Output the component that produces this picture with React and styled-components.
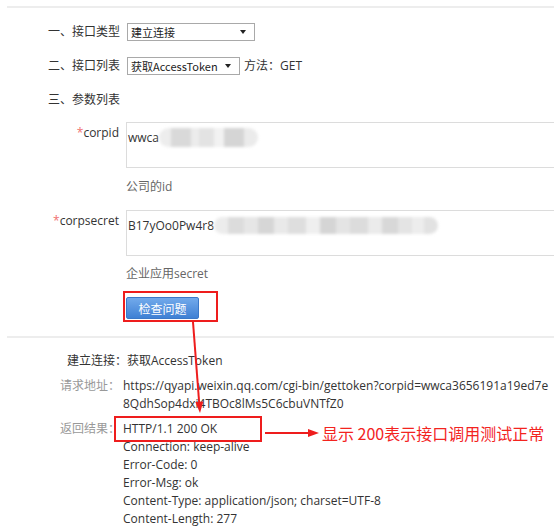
import React from 'react'
import styled, { createGlobalStyle } from 'styled-components'

const GlobalStyle = createGlobalStyle`
  body {
    margin: 0;
    background: #fff;
    color: #333;
    font-family: "Open Sans", "Noto Sans CJK SC", sans-serif;
    font-size: 12px;
  }
`

const RED = '#ee1d1d'

const Page = styled.div`
    position: relative;
    width: 100%;
    height: 526px;
    overflow: hidden;
    box-sizing: border-box;
    padding: 6px 0 0 7px;
`

const Rule = styled.div`
    height: 2px;
    background: #ededed;
    margin-top: ${p => p.$top || 0}px;
`

const Steps = styled.div`
    display: flex;
    flex-direction: column;
    gap: 16px;
    margin-top: 15px;
    padding-left: 41px;
`

const Step = styled.div`
    display: flex;
    align-items: center;
    gap: 7px;
    height: 18px;
    line-height: 18px;
    white-space: nowrap;
`

const Select = styled.div`
    position: relative;
    width: ${p => p.$w}px;
    height: 18px;
    box-sizing: border-box;
    border: 1px solid #a9a9a9;
    padding-left: 3px;
    font-family: "Noto Sans CJK SC", sans-serif;
    font-size: 11px;
    line-height: 16px;
    background: #fff;
    color: #222;
    &::after {
        content: "";
        position: absolute;
        right: 8px;
        top: 6px;
        border-left: 3px solid transparent;
        border-right: 3px solid transparent;
        border-top: 4px solid #222;
    }
`

const Method = styled.span`
    margin-left: -3px;
`

const ParamRow = styled.div`
    display: flex;
    gap: 7px;
    margin-top: ${p => p.$top}px;
`

const ParamLabel = styled.div`
    width: 112px;
    flex-shrink: 0;
    text-align: right;
    padding-top: 2px;
    line-height: 18px;
    color: #333;
`

const Star = styled.span`
    color: #f07070;
`

const Field = styled.div`
    width: 460px;
    flex-shrink: 0;
    height: 46px;
    box-sizing: border-box;
    border: 1px solid #dcdcdc;
    padding: 6px 2px 0 1px;
    font-size: 12px;
    line-height: 18px;
    white-space: nowrap;
    color: #333;
`

const Mosaic = styled.span`
    display: inline-flex;
    vertical-align: middle;
    height: ${p => p.$h}px;
    border-radius: ${p => p.$h / 2}px;
    overflow: hidden;
    filter: blur(1.6px);
    margin-top: -3px;
`

const Cell = styled.span`
    display: block;
    height: 100%;
    width: ${p => p.$w}px;
    background: ${p => p.$c};
`

const Hint = styled.div`
    line-height: 18px;
    color: #666;
`

const ButtonWrap = styled.div`
    position: relative;
`

const CheckButton = styled.button`
    display: block;
    width: 73px;
    height: 22px;
    box-sizing: border-box;
    border: 1px solid #3a78c8;
    border-radius: 2px;
    background: linear-gradient(#72aaeb, #3f80d4);
    color: #fff;
    font-family: "Noto Sans CJK SC", sans-serif;
    font-size: 12px;
    padding: 0;
    cursor: pointer;
`

const RedFrame = styled.span`
    position: absolute;
    left: ${p => p.$l}px;
    top: ${p => p.$t}px;
    width: ${p => p.$w}px;
    height: ${p => p.$h}px;
    box-sizing: border-box;
    border: 2px solid ${RED};
    pointer-events: none;
`

const Results = styled.div`
    display: flex;
    flex-direction: column;
    gap: 7px;
    margin-top: 14px;
`

const Title = styled.div`
    padding-left: 60px;
    line-height: 18px;
    color: #333;
`

const ResultRow = styled.div`
    display: grid;
    grid-template-columns: 113px 1fr;
    column-gap: 3px;
`

const ResultLabel = styled.div`
    text-align: right;
    color: #999;
    line-height: 18px;
`

const Lines = styled.div`
    line-height: 18px;
    white-space: nowrap;
    color: #333;
`

const FirstLine = styled.div`
    position: relative;
`

const Callout = styled.span`
    position: absolute;
    left: 199px;
    top: 3px;
    font-family: "Noto Sans CJK SC", sans-serif;
    font-size: 16px;
    line-height: 20px;
    color: #f3241f;
    white-space: nowrap;
`

const SideArrow = styled.svg`
    position: absolute;
    left: 142px;
    top: 9px;
`

const Overlay = styled.svg`
    position: absolute;
    left: 0;
    top: 0;
    pointer-events: none;
`

const corpidBlur = [
    [12, '#ededed'], [20, '#d9d9d9'], [8, '#ececec'], [15, '#e3e3e3'],
    [10, '#f2f2f2'], [20, '#d5d5d5'], [14, '#ebebeb'],
]

const secretBlur = [
    [14, '#ececec'], [16, '#dcdcdc'], [14, '#e6e6e6'], [16, '#d6d6d6'],
    [14, '#e9e9e9'], [18, '#dedede'], [14, '#efefef'], [16, '#d5d5d5'],
    [14, '#e4e4e4'], [18, '#dcdcdc'], [14, '#ebebeb'], [16, '#d8d8d8'],
    [14, '#e4e4e4'], [12, '#ededed'], [14, '#e2e2e2'],
]

function Blur({ cells, h }) {
    return (
        <Mosaic $h={h}>
            {cells.map(([w, c], i) => <Cell key={i} $w={w} $c={c} />)}
        </Mosaic>
    )
}

function App() {
    return (
        <Page>
            <GlobalStyle />
            <Rule />
            <Steps>
                <Step>
                    <span>一、接口类型</span>
                    <Select $w={128}>建立连接</Select>
                </Step>
                <Step>
                    <span>二、接口列表</span>
                    <Select $w={113}>获取AccessToken</Select>
                    <Method>方法：GET</Method>
                </Step>
                <Step>
                    <span>三、参数列表</span>
                </Step>
            </Steps>

            <ParamRow $top={13}>
                <ParamLabel><Star>*</Star>corpid</ParamLabel>
                <Field>wwca<Blur cells={corpidBlur} h={19} /></Field>
            </ParamRow>
            <ParamRow $top={10}>
                <ParamLabel />
                <Hint>公司的id</Hint>
            </ParamRow>
            <ParamRow $top={14}>
                <ParamLabel><Star>*</Star>corpsecret</ParamLabel>
                <Field>B17yOo0Pw4r8<Blur cells={secretBlur} h={17} /></Field>
            </ParamRow>
            <ParamRow $top={9}>
                <ParamLabel />
                <Hint>企业应用secret</Hint>
            </ParamRow>
            <ParamRow $top={14}>
                <ParamLabel />
                <ButtonWrap>
                    <CheckButton>检查问题</CheckButton>
                    <RedFrame $l={-3} $t={-6} $w={95} $h={31} />
                </ButtonWrap>
            </ParamRow>

            <Rule $top={17} />

            <Results>
                <Title>建立连接：获取AccessToken</Title>
                <ResultRow>
                    <ResultLabel>请求地址：</ResultLabel>
                    <Lines>
                        <div>https://qyapi.weixin.qq.com/cgi-bin/gettoken?corpid=wwca3656191a19ed7e</div>
                        <div>8QdhSop4dxi4TBOc8lMs5C6cbuVNTfZ0</div>
                    </Lines>
                </ResultRow>
                <ResultRow>
                    <ResultLabel>返回结果：</ResultLabel>
                    <Lines>
                        <FirstLine>
                            HTTP/1.1 200 OK
                            <RedFrame $l={-9} $t={-4} $w={148} $h={26} />
                            <SideArrow width="54" height="8" viewBox="0 0 54 8">
                                <line x1="0" y1="4" x2="44" y2="4" stroke={RED} strokeWidth="2" />
                                <polygon points="43,0 54,4 43,8" fill={RED} />
                            </SideArrow>
                            <Callout>显示 200表示接口调用测试正常</Callout>
                        </FirstLine>
                        <div>Connection: keep-alive</div>
                        <div>Error-Code: 0</div>
                        <div>Error-Msg: ok</div>
                        <div>Content-Type: application/json; charset=UTF-8</div>
                        <div>Content-Length: 277</div>
                    </Lines>
                </ResultRow>
            </Results>

            <Overlay width="554" height="526" viewBox="0 0 554 526">
                <line x1="193" y1="322" x2="199.2" y2="403" stroke={RED} strokeWidth="2" />
                <polygon points="195.3,402 203.3,401.4 200,413" fill={RED} />
            </Overlay>
        </Page>
    )
}

export default App
